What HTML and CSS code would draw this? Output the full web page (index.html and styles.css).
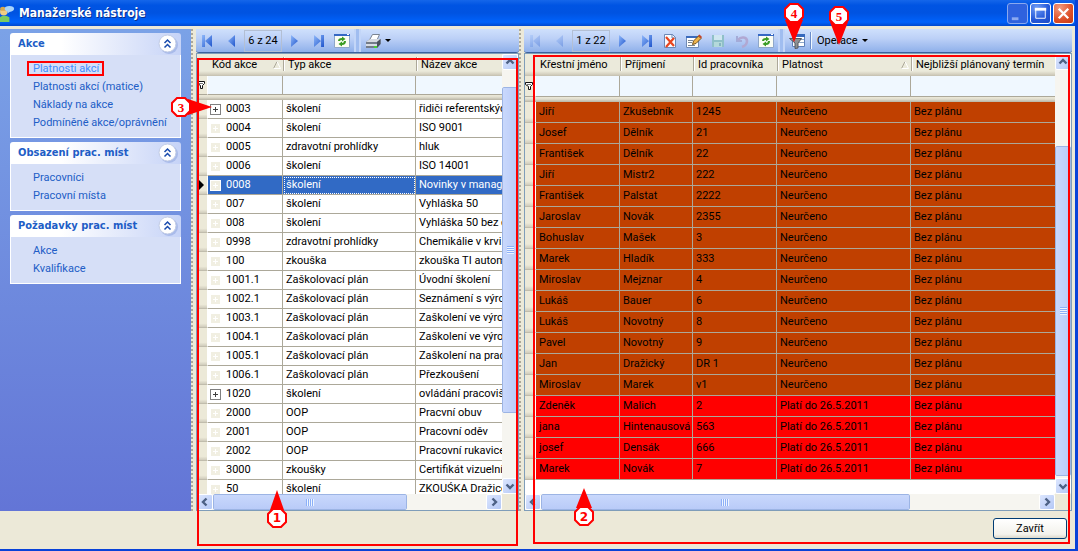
FILE: index.html
```html
<!DOCTYPE html>
<html lang="cs">
<head>
<meta charset="utf-8">
<title>Manažerské nástroje</title>
<link rel="stylesheet" href="styles.css">
</head>
<body>
<svg class="defs" width="0" height="0" aria-hidden="true">
  <defs>
    <linearGradient id="g-blue" x1="0" y1="0" x2="1" y2="1"><stop offset="0" stop-color="#8fb8fa"/><stop offset="1" stop-color="#1f55cc"/></linearGradient>
    <symbol id="i-first" viewBox="0 0 16 16"><path d="M2 2h3v12H2z M12 2v12L5 8z" fill="url(#g-blue)"/></symbol>
    <symbol id="i-prev" viewBox="0 0 16 16"><path d="M11 2v12L4 8z" fill="url(#g-blue)"/></symbol>
    <symbol id="i-next" viewBox="0 0 16 16"><path d="M5 2v12l7-6z" fill="url(#g-blue)"/></symbol>
    <symbol id="i-last" viewBox="0 0 16 16"><path d="M11 2h3v12h-3z M4 2v12l7-6z" fill="url(#g-blue)"/></symbol>
    <symbol id="i-refresh" viewBox="0 0 16 16"><path d="M.5 1.500h15v13H.5z" fill="#fbfdf4" stroke="#8fa7c9"/><path d="M0 1h16v2H0z" fill="#3568c4"/><path d="M13 1h2v1h-2z" fill="#fff"/><path d="M4 8q0-3 4-3V3.500L11.500 6 8 8.500V7q-2 0-2 1z" fill="#3a9b23"/><path d="M12 8q0 4-4 4v1.500L4.500 11 8 8.500V10q2 0 2-2z" fill="#3a9b23"/></symbol>
    <symbol id="i-print" viewBox="0 0 16 16"><path d="M4.500 7L7.500 1.500h7L12 7z" fill="#fff" stroke="#7b8492"/><path d="M1 9l4-3h10.500v5L12 15H1z" fill="#747c89"/><path d="M1 9l4-3h10.500L12 9z" fill="#d6dae1"/><path d="M12 9l3.500-3v5L12 15z" fill="#4b525d"/><path d="M1 11h11v2H1z" fill="#d8dde5"/><path d="M9 13h3v2H9z" fill="#47d031"/></symbol>
    <symbol id="i-delete" viewBox="0 0 16 16"><path d="M2.500 1.500h8l3 3v10h-11z" fill="#f8fbff" stroke="#6b87b5"/><path d="M10 1v4h4" fill="none" stroke="#6b87b5"/><path d="M4 4l8 9M12 5l-8 9" stroke="#e8451f" stroke-width="2.200"/></symbol>
    <symbol id="i-edit" viewBox="0 0 16 16"><path d="M.5 3.500h12v11H.5z" fill="#fff" stroke="#6f8ab5"/><path d="M0 3h12v2H0z" fill="#3a6bbd"/><path d="M2 7.500h5M2 9.500h4M2 12.500h7" stroke="#7a8594"/><path d="M6.500 11.500l1-3.500 5-5 2.500 2.500-5 5z" fill="#f0b44b" stroke="#71501d"/><path d="M12 2.500l3 3 1-1.500-2.500-2.500z" fill="#c44324"/></symbol>
    <symbol id="i-save" viewBox="0 0 16 16"><path d="M2 2h12v12H2z" fill="#8fc0c8"/><path d="M4 2h8v5H4z" fill="#cfe6f0"/><path d="M4 9h8v5H4z" fill="#b4d9da"/><path d="M9 10h2v3H9z" fill="#86b4c2"/></symbol>
    <symbol id="i-undo" viewBox="0 0 16 16"><path d="M3 3v5h5" fill="none" stroke="#a3abd8" stroke-width="2"/><path d="M4 7c3-4 9-3 9 1 0 3-2 5-5 6" fill="none" stroke="#b1a8d2" stroke-width="2.600"/></symbol>
    <symbol id="i-filter" viewBox="0 0 16 16"><path d="M3.500 1.500h12v12h-12z" fill="#fff" stroke="#5f80ba"/><path d="M3 1h13v3H3z" fill="#3568bd"/><path d="M10 6.500h5M10 9.500h5" stroke="#8fa7c9"/><path d="M.5 5.500h12L9 10v5l-3 .5V10z" fill="#8d9094" stroke="#54585e"/></symbol>
    <symbol id="i-chev" viewBox="0 0 20 20"><circle cx="11" cy="11" r="9" fill="#a9bbea"/><circle cx="9.500" cy="9.500" r="8.500" fill="#fff" stroke="#c2cce5"/><path d="M6.500 9l3-3 3 3M6.500 13.500l3-3 3 3" fill="none" stroke="#194bad" stroke-width="1.500"/></symbol>
    <symbol id="i-arrow" viewBox="0 0 10 10"><path d="M1.500 6.500L5 3l3.500 3.500" fill="none" stroke="#4d6185" stroke-width="2.400"/></symbol>
    <symbol id="i-funnel" viewBox="0 0 8 10"><path d="M.5 1.500h7v2l-2 2v3h-2v-3l-3-2z" fill="#fff" stroke="#111"/><path d="M2 3.500h4" stroke="#777"/></symbol>
    <symbol id="i-sort" viewBox="0 0 8 8"><path d="M.5 7.500L4 .5" fill="none" stroke="#aca899"/><path d="M4 .5l3.500 7h-7" fill="none" stroke="#fff"/></symbol>
  </defs>
</svg>
<div class="window">
  <header class="titlebar">
    <svg class="app-icon" viewBox="0 0 16 20" aria-hidden="true"><circle cx="4" cy="8" r="4" fill="#f0cd83"/><path d="M0 4q4-3 7 1v2H1z" fill="#d8a84c"/><path d="M0 19v-5q4-3 10 0v5z" fill="#7acb62"/><ellipse cx="10" cy="5" rx="5" ry="3" fill="#a9d4fb"/><path d="M8 7v3l4-3z" fill="#a9d4fb"/></svg>
    <h1>Manažerské nástroje</h1>
    <div class="win-buttons">
      <button class="win min" aria-label="Minimalizovat"><svg viewBox="0 0 20 20"><path d="M4 14h7v3H4z" fill="#8ba9f0"/></svg></button>
      <button class="win" aria-label="Maximalizovat"><svg viewBox="0 0 20 20"><path d="M5 5h10v10H5z" fill="none" stroke="#fff"/><path d="M4 4h12v3H4z" fill="#fff"/></svg></button>
      <button class="win close" aria-label="Zavřít okno"><svg viewBox="0 0 20 20"><path d="M5 5l10 10M15 5L5 15" stroke="#fff" stroke-width="2.400"/></svg></button>
    </div>
  </header>
  <main class="workspace">
    <nav class="sidebar">
      <section class="group">
        <h2>Akce <button aria-label="Sbalit Akce"><svg><use href="#i-chev"/></svg></button></h2>
        <ul><li><a class="current" href="#">Platnosti akcí</a></li><li><a href="#">Platnosti akcí (matice)</a></li><li><a href="#">Náklady na akce</a></li><li><a href="#">Podmíněné akce/oprávnění</a></li></ul>
      </section>
      <section class="group">
        <h2>Obsazení prac. míst <button aria-label="Sbalit Obsazení"><svg><use href="#i-chev"/></svg></button></h2>
        <ul><li><a href="#">Pracovníci</a></li><li><a href="#">Pracovní místa</a></li></ul>
      </section>
      <section class="group">
        <h2>Požadavky prac. míst <button aria-label="Sbalit Požadavky"><svg><use href="#i-chev"/></svg></button></h2>
        <ul><li><a href="#">Akce</a></li><li><a href="#">Kvalifikace</a></li></ul>
      </section>
    </nav>
    <div class="splitter"></div>
    <section class="panel panel-left">
      <div class="toolbar">
        <button aria-label="První"><svg><use href="#i-first"/></svg></button><button aria-label="Předchozí"><svg><use href="#i-prev"/></svg></button>
        <output>6 z 24</output>
        <button aria-label="Další"><svg><use href="#i-next"/></svg></button><button aria-label="Poslední"><svg><use href="#i-last"/></svg></button><button aria-label="Obnovit"><svg><use href="#i-refresh"/></svg></button>
        <span class="break"></span>
        <button class="drop" aria-label="Tisk"><svg><use href="#i-print"/></svg><i class="caret"></i></button>
      </div>
      <div class="grid">
        <div class="view">
          <table class="actions">
            <colgroup><col class="c-sel"><col class="c-code"><col class="c-type"><col></colgroup>
            <thead>
              <tr class="heads"><td></td><th><span class="sorted">Kód akce<svg><use href="#i-sort"/></svg></span></th><th>Typ akce</th><th>Název akce</th></tr>
              <tr class="filters"><td class="sel"><svg><use href="#i-funnel"/></svg></td><td><input aria-label="Filtr kód akce"></td><td><input aria-label="Filtr typ akce"></td><td><input aria-label="Filtr název akce"></td></tr>
              <tr class="strip"><td colspan="4"></td></tr>
            </thead>
            <tbody id="actions"></tbody>
          </table>
        </div>
        <div class="vbar"><button aria-label="Nahoru"><svg><use href="#i-arrow"/></svg></button><div class="track"><span class="thumb v-left"></span></div><button class="down" aria-label="Dolů"><svg><use href="#i-arrow"/></svg></button></div>
        <div class="hbar"><button class="left" aria-label="Vlevo"><svg><use href="#i-arrow"/></svg></button><div class="track"><span class="thumb h-left"></span></div><button class="right" aria-label="Vpravo"><svg><use href="#i-arrow"/></svg></button></div>
      </div>
    </section>
    <div class="splitter"></div>
    <section class="panel panel-right">
      <div class="toolbar">
        <button class="off" aria-label="První"><svg><use href="#i-first"/></svg></button><button class="off" aria-label="Předchozí"><svg><use href="#i-prev"/></svg></button>
        <output>1 z 22</output>
        <button aria-label="Další"><svg><use href="#i-next"/></svg></button><button aria-label="Poslední"><svg><use href="#i-last"/></svg></button><button aria-label="Smazat"><svg><use href="#i-delete"/></svg></button><button aria-label="Upravit"><svg><use href="#i-edit"/></svg></button><button aria-label="Uložit"><svg><use href="#i-save"/></svg></button><button aria-label="Zpět"><svg><use href="#i-undo"/></svg></button><button aria-label="Obnovit"><svg><use href="#i-refresh"/></svg></button>
        <span class="break"></span>
        <button aria-label="Filtr"><svg><use href="#i-filter"/></svg></button><span class="divider"></span>
        <button class="drop">Operace<i class="caret"></i></button>
      </div>
      <div class="grid">
        <div class="view">
          <table class="people">
            <colgroup><col class="c-sel"><col class="c-first"><col class="c-last"><col class="c-id"><col class="c-valid"><col></colgroup>
            <thead>
              <tr class="heads"><td></td><th>Křestní jméno</th><th>Příjmení</th><th>Id pracovníka</th><th><span class="sorted">Platnost<svg><use href="#i-sort"/></svg></span></th><th>Nejbližší plánovaný termín</th></tr>
              <tr class="filters"><td class="sel"><svg><use href="#i-funnel"/></svg></td><td><input aria-label="Filtr křestní jméno"></td><td><input aria-label="Filtr příjmení"></td><td><input aria-label="Filtr id pracovníka"></td><td><input aria-label="Filtr platnost"></td><td><input aria-label="Filtr termín"></td></tr>
              <tr class="strip"><td colspan="6"></td></tr>
            </thead>
            <tbody id="people"></tbody>
          </table>
        </div>
        <div class="vbar"><button aria-label="Nahoru"><svg><use href="#i-arrow"/></svg></button><div class="track"><span class="thumb v-right"></span></div><button class="down" aria-label="Dolů"><svg><use href="#i-arrow"/></svg></button></div>
        <div class="hbar"><button class="left" aria-label="Vlevo"><svg><use href="#i-arrow"/></svg></button><div class="track"><span class="thumb h-right"></span></div><button class="right" aria-label="Vpravo"><svg><use href="#i-arrow"/></svg></button></div>
      </div>
    </section>
  </main>
  <footer class="actions-bar"><button class="dialog-button">Zavřít</button></footer>
</div>
<svg class="callouts" width="1078" height="551" viewBox="0 0 1078 551">
  <g fill="none" stroke="#f00" stroke-width="2">
    <rect x="28" y="62" width="75" height="13"/>
    <rect x="198" y="59" width="319" height="486"/>
    <rect x="534" y="56" width="535" height="487"/>
  </g>
  <g fill="#f00"><path d="M277 490l7 20h-14z"/><path d="M584 488l8 20h-16z"/><path d="M212 107l-24 8v-16z"/><path d="M794 42l-9-22h18z"/><path d="M839 45l-9-23h18z"/></g>
  <g fill="#fff" stroke="#f00" stroke-width="2">
    <path d="M273 509h8l5 5v8l-5 5h-8l-5-5v-8z"/>
    <path d="M580 507h8l5 5v8l-5 5h-8l-5-5v-8z"/>
    <path d="M177 98h8l5 5v8l-5 5h-8l-5-5v-8z"/>
    <path d="M790 4h8l5 5v8l-5 5h-8l-5-5v-8z"/>
    <path d="M835 7h8l5 5v8l-5 5h-8l-5-5v-8z"/>
  </g>
  <g class="marks"><text class="sans" x="277" y="522">1</text><text class="sans" x="584" y="521">2</text><text x="181" y="112">3</text><text x="794" y="18">4</text><text x="839" y="21">5</text></g>
</svg>
<script src="data.js"></script>
</body>
</html>
```
FILE: styles.css
```css
* { box-sizing: border-box; }
body { margin: 0; font: 11px/14px Roboto, "DejaVu Sans Condensed", sans-serif; color: #000; background: #ece9d8; }
button, input { font: inherit; color: inherit; border: 0; padding: 0; margin: 0; background: none; }
svg { display: block; }
.defs { position: absolute; }
.window { display: flex; flex-direction: column; height: 100vh; border-right: 3px solid #0842d8; border-bottom: 2px solid #0842d8; overflow: hidden; }

.titlebar { flex: none; display: flex; align-items: center; height: 26px; background: linear-gradient(#1566ea, #0054e3 20%, #0053e1 50%, #0062fb 85%, #0048cd); margin-right: -3px; padding-right: 4px; }
.titlebar h1 { flex: 1; margin: 0; padding-left: 4px; font: bold 12px/20px "DejaVu Sans Condensed", "DejaVu Sans", sans-serif; color: #fff; text-shadow: 1px 1px 0 #0a2f8c; }
.app-icon { width: 15px; height: 19px; }
.win-buttons { display: flex; gap: 2px; }
.win { width: 21px; height: 21px; border: 1px solid #fff; border-radius: 3px; background: radial-gradient(circle at 30% 20%, #6f9cf5, #2458d8 60%, #1d49c3); }
.win svg { width: 19px; height: 19px; }
.win.min { border-color: #8aa9ef; background: #2f62de; }
.win.close { background: radial-gradient(circle at 30% 20%, #f09a80, #dd4f27 60%, #c73a12); }

.workspace { flex: 1; display: flex; min-height: 0; padding: 3px 3px 0 0; }
.sidebar { flex: none; width: 191px; padding: 4px 10px; background: linear-gradient(#7ba2e7, #6375d6); }
.group { margin-bottom: 4px; }
.group h2 { display: flex; align-items: center; justify-content: space-between; height: 22px; margin: 0; padding: 0 3px 0 8px; font: bold 11px/16px "DejaVu Sans Condensed", "DejaVu Sans", sans-serif; color: #215dc6; background: linear-gradient(90deg, #fff 30%, #c6d3f7); border-radius: 3px 3px 0 0; }
.group h2 svg { width: 20px; height: 20px; }
.group ul { margin: 0; padding: 5px 0 5px 22px; list-style: none; border: 1px solid #fff; border-top: 0; background: #d6dff7; }
.group li { height: 18px; line-height: 18px; white-space: nowrap; }
.group a { color: #215dc6; text-decoration: none; }
.group a.current { color: #428eff; }

.splitter { flex: none; width: 5px; border-left: 2px dotted #aca899; background: #ece9d8; }
.panel { display: flex; flex-direction: column; min-width: 0; }
.panel-left { flex: 0 0 323px; }
.panel-right { flex: 1; }

.toolbar { flex: none; display: flex; align-items: center; height: 24px; background: linear-gradient(#cfe0fc, #bdd1f7 40%, #8fb0ea); border-bottom: 1px solid #3b619c; border-radius: 0 0 3px 3px; white-space: nowrap; }
.toolbar button { flex: none; display: flex; align-items: center; justify-content: center; width: 24px; height: 22px; }
.toolbar button svg { width: 16px; height: 16px; }
.toolbar .off { opacity: .3; }
.toolbar output { width: 38px; height: 22px; border: 1px solid #b3bfd4; text-align: center; line-height: 20px; }
.toolbar .drop { width: auto; gap: 4px; padding: 0 4px; }
.break { width: 7px; height: 23px; border-left: 2px solid #c3d6f8; border-right: 2px solid #c3d6f8; background: #a0bdf0; }
.divider { width: 2px; height: 17px; margin: 0 1px; border-left: 1px solid #6a8ccb; border-right: 1px solid #f1f9ff; }
.caret { border: 3px solid transparent; border-top-color: #000; border-bottom: 0; }

.grid { flex: 1; display: grid; grid-template: minmax(0, 1fr) 16px / minmax(0, 1fr) 16px; min-height: 0; border: 1px solid #7f9db9; background: #ece9d8; }
.view { overflow: hidden; background: #fff; }
table { width: 100%; table-layout: fixed; border-collapse: separate; border-spacing: 0; }
.c-sel { width: 11px; }
.c-code { width: 75px; }
.c-type { width: 133px; }
.c-first { width: 84px; }
.c-last { width: 73px; }
.c-id { width: 84px; }
.c-valid { width: 134px; }
td, th { padding: 0; white-space: nowrap; overflow: hidden; text-align: left; font-weight: normal; }
.heads td, .heads th { height: 22px; padding: 0 0 0 4px; background: linear-gradient(#ebeadb 17px, #d6d2c2 20px, #c3bfb0); }
.heads th + th { padding-left: 5px; background: linear-gradient(#aca899, #aca899) 0 3px / 1px 14px no-repeat, linear-gradient(#fff, #fff) 1px 3px / 1px 14px no-repeat, linear-gradient(#ebeadb 17px, #d6d2c2 20px, #c3bfb0); }
.sorted { display: flex; align-items: center; justify-content: space-between; padding-right: 2px; }
.sorted svg { width: 8px; height: 8px; }
.filters td { height: 19px; border-right: 1px solid #aca899; border-bottom: 1px solid #aca899; background: #f0f8ff; }
.filters input { display: block; width: 100%; height: 18px; }
.people .filters td { height: 21px; }
.people .filters input { height: 20px; }
.strip td { height: 5px; background: linear-gradient(#ece9d8, #e2dfd0 40%, #b8b4a4); }
.sel, .filters .sel { border-right: 1px solid #fff; background: #ece9d8; }
.filters .sel svg { width: 8px; height: 10px; }
tbody td { height: 19px; padding-left: 3px; border-right: 1px solid #aca899; border-bottom: 1px solid #aca899; }
tbody .sel { padding: 0; border-bottom: 1px solid #c0bcac; background: linear-gradient(#ece9d8 80%, #d0ccbc); }
td:last-child { border-right: 0; }
.people tbody td { height: 21px; }
.actions .code { padding-left: 2px; }
.node { display: flex; align-items: center; gap: 5px; }
.box { position: relative; flex: none; width: 11px; height: 11px; border: 1px solid #fff; background: #f1efe2; }
.box::before, .box::after { content: ""; position: absolute; inset: 4px 2px; background: #fff; }
.box::after { inset: 2px 4px; }
.box.open { border-color: #808080; background: #fff; }
.box.open::before, .box.open::after { background: #404040; }
.chosen td:not(.sel) { color: #fff; background: #316ac5; }
.chosen .focus { outline: 1px dotted #fff; outline-offset: -2px; }
.chosen .sel::before { content: ""; display: block; width: 0; margin-left: 2px; border: 5px solid transparent; border-left-color: #000; border-right: 0; }
.unset td:not(.sel) { background: #c04000; }
.expiring td:not(.sel) { background: #f00; }

.vbar, .hbar { display: flex; background: #f6f5f0; }
.vbar { flex-direction: column; }
.vbar button, .hbar button { flex: none; display: grid; place-items: center; width: 16px; height: 16px; border: 1px solid #fff; border-radius: 2px; background: linear-gradient(135deg, #dce6fe, #b4c8f6); }
.vbar button svg, .hbar button svg { width: 10px; height: 10px; }
.down svg { transform: rotate(180deg); }
.left svg { transform: rotate(-90deg); }
.right svg { transform: rotate(90deg); }
.track { flex: 1; display: flex; min-height: 0; }
.vbar .track { flex-direction: column; }
.thumb { border: 1px solid #fff; border-radius: 2px; outline: 1px solid #9cb4e4; outline-offset: -1px; }
.vbar .thumb { width: 16px; background: repeating-linear-gradient(#8cb0f8 0 1px, #eef4fe 1px 2px) center / 7px 8px no-repeat, linear-gradient(90deg, #c9d8fc, #b9cbf8); }
.hbar .thumb { height: 16px; background: repeating-linear-gradient(90deg, #8cb0f8 0 1px, #eef4fe 1px 2px) center / 8px 7px no-repeat, linear-gradient(#c9d8fc, #b9cbf8); }
.v-left { height: 80%; margin-top: 17px; }
.v-right { height: 81%; margin-top: 76px; }
.h-left { width: 71%; }
.h-right { width: 74%; }

.actions-bar { flex: none; display: flex; justify-content: flex-end; align-items: flex-start; height: 38px; padding: 7px 8px 0 0; }
.dialog-button { width: 74px; height: 21px; border: 1px solid #003c74; border-radius: 3px; background: linear-gradient(#fff, #f3f2ec 80%, #dcd8cb); }
.callouts { position: absolute; left: 0; top: 0; pointer-events: none; }
.marks { font: bold 13px "Liberation Serif", serif; fill: #f00; text-anchor: middle; }
.marks .sans { font-family: "DejaVu Sans", sans-serif; font-size: 12px; }
```
FILE: data.js
```js
const actions = [
  ["0003", "školení", "řidiči referentskýc"], ["0004", "školení", "ISO 9001"],
  ["0005", "zdravotní prohlídky", "hluk"], ["0006", "školení", "ISO 14001"],
  ["0008", "školení", "Novinky v manage"], ["007", "školení", "Vyhláška 50"],
  ["008", "školení", "Vyhláška 50 bez o"], ["0998", "zdravotní prohlídky", "Chemikálie v krvi"],
  ["100", "zkouška", "zkouška TI autom"], ["1001.1", "Zaškolovací plán", "Úvodní školení"],
  ["1002.1", "Zaškolovací plán", "Seznámení s výro"], ["1003.1", "Zaškolovací plán", "Zaškolení ve výro"],
  ["1004.1", "Zaškolovací plán", "Zaškolení ve výro"], ["1005.1", "Zaškolovací plán", "Zaškolení na prac"],
  ["1006.1", "Zaškolovací plán", "Přezkoušení"], ["1020", "školení", "ovládání pracoviš"],
  ["2000", "OOP", "Pracvní obuv"], ["2001", "OOP", "Pracovní oděv"], ["2002", "OOP", "Pracovní rukavice"],
  ["3000", "zkoušky", "Certifikát vizuelní"], ["50", "školení", "ZKOUŚKA Dražice"]
];
const people = [
  ["Jiří", "Zkušebník", "1245"], ["Josef", "Dělník", "21"], ["František", "Dělník", "22"],
  ["Jiří", "Mistr2", "222"], ["František", "Palstat", "2222"], ["Jaroslav", "Novák", "2355"],
  ["Bohuslav", "Mašek", "3"], ["Marek", "Hladík", "333"], ["Miroslav", "Mejznar", "4"],
  ["Lukáš", "Bauer", "6"], ["Lukáš", "Novotný", "8"], ["Pavel", "Novotný", "9"],
  ["Jan", "Dražický", "DR 1"], ["Miroslav", "Marek", "v1"], ["Zdeněk", "Malich", "2"],
  ["jana", "Hintenausová", "563"], ["josef", "Densák", "666"], ["Marek", "Novák", "7"]
];
document.getElementById("actions").innerHTML = actions.map(([code, type, name]) => {
  const open = code === "0003" || code === "1020" ? " open" : "";
  return `<tr class="${code === "0008" ? "chosen" : ""}"><td class="sel"></td><td class="code"><span class="node"><i class="box${open}"></i>${code}</span></td><td class="focus">${type}</td><td>${name}</td></tr>`;
}).join("");
document.getElementById("people").innerHTML = people.map(([first, last, id], n) => {
  const late = n > 13;
  return `<tr class="${late ? "expiring" : "unset"}"><td class="sel"></td><td>${first}</td><td>${last}</td><td>${id}</td><td>${late ? "Platí do 26.5.2011" : "Neurčeno"}</td><td>Bez plánu</td></tr>`;
}).join("");
```
